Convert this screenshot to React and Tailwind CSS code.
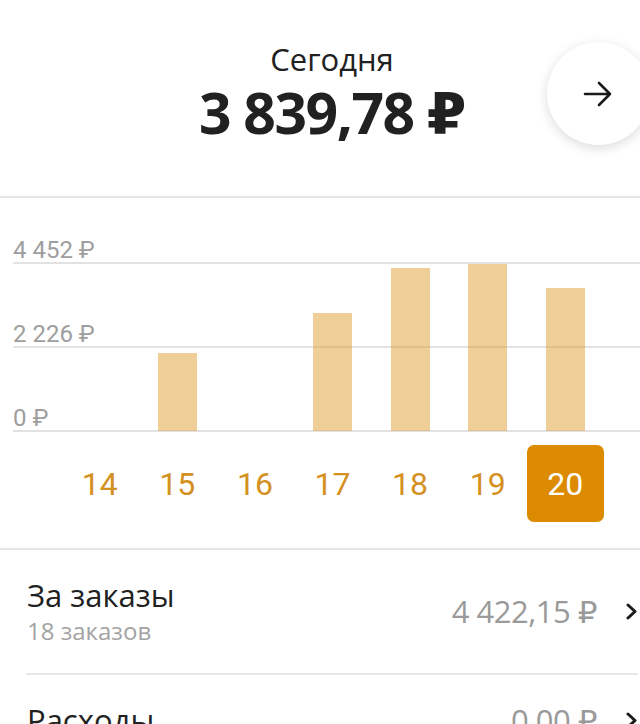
import React from 'react';

const days = [
  { day: 14, h: 0 },
  { day: 15, h: 78 },
  { day: 16, h: 0 },
  { day: 17, h: 118 },
  { day: 18, h: 163 },
  { day: 19, h: 167 },
  { day: 20, h: 143, active: true },
];

const yLabels = ['4 452 ₽', '2 226 ₽', '0 ₽'];

const Chevron = () => (
  <svg width="13" height="17" viewBox="0 0 13 17" fill="none">
    <polyline points="3,2 10,8.5 3,15" stroke="#1a1a1a" strokeWidth="3" strokeLinecap="round" strokeLinejoin="round" />
  </svg>
);

const Row = ({ title, sub, amount }) => (
  <div className="flex items-center justify-between pl-[27px] pr-[2px] pt-[25px] pb-[26px]">
    <div>
      <div className="text-[31px] leading-[40px] text-[#212121]">{title}</div>
      {sub && <div className="text-[24px] leading-[32px] text-[#a3a3a3]">{sub}</div>}
    </div>
    <div className="flex items-center gap-[28px]">
      <span className="text-[31px] leading-[40px] text-[#9a9a9a] tracking-[-0.5px]">{amount}</span>
      <Chevron />
    </div>
  </div>
);

export default function App() {
  return (
    <div className="w-[640px] h-[724px] overflow-hidden bg-white font-['Open_Sans','DejaVu_Sans',sans-serif]">
      {/* header */}
      <div className="relative h-[196px] pl-[24px] pt-[39px] text-center text-[#212121]">
        <div className="text-[31px] leading-[40px]">Сегодня</div>
        <div className="mt-[4px] text-[57px] leading-[58px] font-bold tracking-[-1.5px]">3 839,78 ₽</div>
        <button className="absolute left-[547px] top-[42px] w-[103px] h-[103px] rounded-full bg-white shadow-[0_3px_12px_rgba(0,0,0,0.14)] flex items-center justify-center pr-[2px]">
          <svg width="30" height="26" viewBox="0 0 30 26" fill="none">
            <path d="M2 13H27M16 2L27 13L16 24" stroke="#1a1a1a" strokeWidth="2.6" strokeLinecap="round" strokeLinejoin="round" />
          </svg>
        </button>
      </div>
      <div className="h-[2px] bg-[#e6e6e6]" />

      {/* chart */}
      <div className="relative font-['Roboto',sans-serif]">
        {yLabels.map((l, i) => (
          <div key={l} className={`ml-[13px] flex flex-col justify-end border-b-2 border-[#e2e2e2] ${i === 0 ? 'h-[66px]' : 'h-[84px]'}`}>
            <span className="text-[24px] leading-[24px] text-[#9e9e9e]">{l}</span>
          </div>
        ))}
        <div className="absolute left-[61px] bottom-[1px] w-[543px] h-[200px] grid grid-cols-7 items-end">
          {days.map((d) => (
            <div key={d.day} className="flex justify-center">
              {d.h > 0 && <div className="w-[39px] bg-[#e0a030]/50" style={{ height: d.h }} />}
            </div>
          ))}
        </div>
      </div>

      {/* days */}
      <div className="pl-[61px] pt-[13px] font-['Roboto',sans-serif]">
        <div className="w-[543px] grid grid-cols-7">
          {days.map((d) => (
            <div key={d.day} className="flex justify-center">
              <div
                className={
                  d.active
                    ? 'w-[77px] h-[77px] rounded-[7px] bg-[#dc8b00] text-white flex items-center justify-center text-[32px]'
                    : 'w-[77px] h-[77px] text-[#d4911f] flex items-center justify-center text-[32px]'
                }
              >
                {d.day}
              </div>
            </div>
          ))}
        </div>
      </div>
      <div className="mt-[26px] h-[2px] bg-[#e6e6e6]" />

      <Row title="За заказы" sub="18 заказов" amount="4 422,15 ₽" />
      <div className="ml-[26px] mr-[2px] h-[2px] bg-[#e8e8e8]" />
      <Row title="Расходы" amount="0,00 ₽" />
    </div>
  );
}
